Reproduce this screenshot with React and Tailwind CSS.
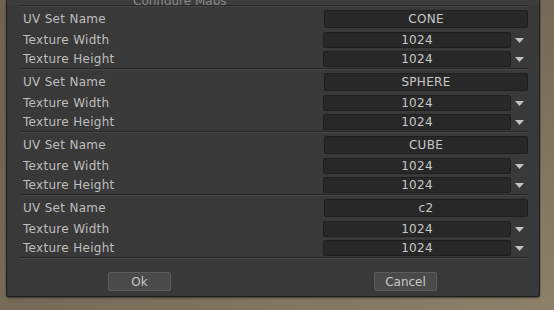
const sets = ["CONE", "SPHERE", "CUBE", "c2"];

function Arrow() {
  return (
    <svg width="9" height="5" viewBox="0 0 9 5" className="block">
      <path d="M0 0 H9 L4.5 5 Z" fill="#c4c4c4" />
    </svg>
  );
}

function Field({ value, wide }) {
  return (
    <div
      className={`flex shrink-0 items-center justify-center rounded-[2px] border border-[#1f1f1f] bg-[#282828] text-[12px] tracking-[0.3px] text-[#c8c8c8] ${
        wide ? "h-[18px] w-[204px] ml-px" : "h-[16px] w-[188px]"
      }`}
    >
      {value}
    </div>
  );
}

function Section({ name }) {
  return (
    <div className="flex flex-col border-t border-[#262626]">
      <div className="h-px bg-[#474747]" />
      <div className="flex flex-col pt-[3px] pb-px">
        <div className="flex h-[18px] items-center">
          <span className="ml-[3px] w-[300px] shrink-0 tracking-[0.3px]">UV Set Name</span>
          <Field value={name} wide />
        </div>
        <div className="mt-[4px] flex h-[16px] items-center">
          <span className="ml-[3px] w-[300px] shrink-0 tracking-[0.3px]">Texture Width</span>
          <Field value="1024" />
          <div className="ml-[4px]">
            <Arrow />
          </div>
        </div>
        <div className="mt-[3px] flex h-[16px] items-center">
          <span className="ml-[3px] w-[300px] shrink-0 tracking-[0.3px]">Texture Height</span>
          <Field value="1024" />
          <div className="ml-[4px]">
            <Arrow />
          </div>
        </div>
      </div>
    </div>
  );
}

export default function App() {
  return (
    <div
      className="flex h-[310px] w-[554px] overflow-hidden bg-gradient-to-br from-[#6c6250] via-[#756a57] to-[#8e8169]"
      style={{ fontFamily: '"DejaVu Sans", sans-serif' }}
    >
      <div className="ml-[6px] flex h-[297px] w-[534px] flex-col rounded-b-[3px] border-x border-b border-[#1c1c1c] bg-[#393939] text-[12px] text-[#bebebe] shadow-[0_1px_2px_rgba(0,0,0,0.5)]">
        <div className="flex h-[5px] items-end overflow-hidden bg-[#3d3d3d]">
          <span className="ml-[126px] leading-[8px] text-[#8a8a8a]">Configure Maps</span>
        </div>
        <div className="ml-[13px] mr-[11px] flex flex-col">
          {sets.map((s) => (
            <Section key={s} name={s} />
          ))}
          <div className="border-t border-[#262626]" />
          <div className="h-px bg-[#474747]" />
        </div>
        <div className="mt-[13px] flex">
          <button className="ml-[101px] h-[19px] w-[63px] rounded-[2px] border border-[#5c5c5c] bg-[#4a4a4a] text-[12px] text-[#c8c8c8]">
            Ok
          </button>
          <button className="ml-[203px] h-[19px] w-[63px] rounded-[2px] border border-[#5c5c5c] bg-[#4a4a4a] text-[12px] text-[#c8c8c8]">
            Cancel
          </button>
        </div>
      </div>
    </div>
  );
}
